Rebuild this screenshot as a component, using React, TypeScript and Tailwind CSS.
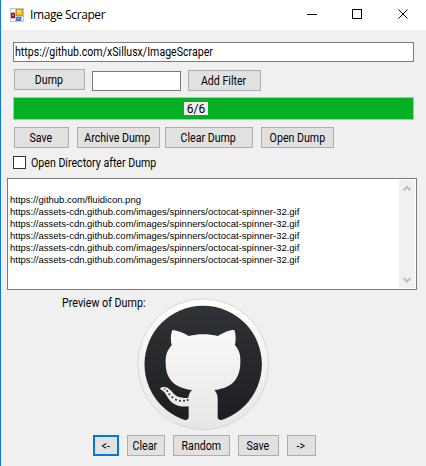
import React from "react";

type ButtonProps = { label: string; className: string; textClass?: string };

function Button({ label, className, textClass = "" }: ButtonProps) {
  return (
    <button
      className={`flex h-[21px] shrink-0 items-center justify-center border bg-[#e1e1e1] pt-[2px] whitespace-nowrap ${className}`}
    >
      <span className={`scale-x-[0.885] leading-[15px] ${textClass}`}>{label}</span>
    </button>
  );
}

function AppIcon() {
  return (
    <svg width="14" height="14" viewBox="0 0 14 14" shapeRendering="crispEdges">
      <rect width="14" height="14" fill="#c4c4c4" />
      <rect x="1" y="1" width="4" height="3" fill="#fff" />
      <rect x="1" y="11" width="4" height="2" fill="#fff" />
      <rect x="12" y="9" width="1" height="4" fill="#fff" />
      <rect x="6" y="1" width="7" height="7" fill="#c9951c" />
      <rect x="7" y="2" width="5" height="5" fill="#fbc92e" />
      <rect x="7" y="2" width="3" height="2" fill="#ffe06c" />
      <rect x="1" y="5" width="4" height="5" fill="#a51414" />
      <rect x="2" y="6" width="2" height="2" fill="#e8604c" />
      <rect x="6" y="9" width="5" height="4" fill="#3f78d0" />
      <rect x="7" y="10" width="3" height="1" fill="#74a9f0" />
    </svg>
  );
}

function Octocat() {
  return (
    <svg className="mt-[7px] h-[134px] w-[134px]" viewBox="18 21 402 402">
      <defs>
        <linearGradient id="ring" x1="0" y1="0" x2="0" y2="1">
          <stop offset="0" stopColor="#ffffff" />
          <stop offset="1" stopColor="#e8e5e6" />
        </linearGradient>
        <linearGradient id="disc" x1="0" y1="0" x2="0" y2="1">
          <stop offset="0" stopColor="#303336" />
          <stop offset="1" stopColor="#1c1d21" />
        </linearGradient>
        <linearGradient id="cat" gradientUnits="userSpaceOnUse" x1="0" y1="24" x2="0" y2="420">
          <stop offset="0" stopColor="#ffffff" />
          <stop offset="1" stopColor="#e8e5e6" />
        </linearGradient>
      </defs>
      <circle cx="219.500" cy="223" r="196" fill="url(#ring)" stroke="#d3d1d2" strokeWidth="2.500" />
      <circle cx="219.500" cy="223" r="176" fill="url(#disc)" />
      <path
        fill="url(#cat)"
        d="M127 120C143 121 161 129 176 138C204 131 236 131 264 138C279 128 297 120 313 120C318 134 318 150 315 166C329 181 332 198 331 218C330 270 303 294 253 300C260 307 263 316 263 328L263 382C263 387 267 390 274 390L268 404L172 404L166 390C172 390 176 387 176 382L176 349C139 353 122 338 110 317C104 306 98 302 91 298C89 293 95 290 102 291C118 292 124 304 133 313C144 323 155 325 175 323C176 314 179 306 187 300C135 294 107 269 107 218C106 198 111 181 125 166C121 150 122 134 127 120Z"
      />
      <g fill="#292b2f">
        <circle cx="104" cy="297" r="2.500" />
        <circle cx="112" cy="303" r="3" />
        <circle cx="118" cy="313" r="3" />
        <circle cx="127" cy="322" r="3" />
        <circle cx="138" cy="329" r="3" />
        <circle cx="150" cy="332" r="3" />
        <circle cx="162" cy="332" r="3" />
        <circle cx="173" cy="330" r="3" />
      </g>
    </svg>
  );
}

const spinner = "https://assets-cdn.github.com/images/spinners/octocat-spinner-32.gif";
const lines = ["https://github.com/fluidicon.png", spinner, spinner, spinner, spinner, spinner];

export default function App() {
  return (
    <div className="h-[466px] w-[426px] overflow-hidden border-l border-[#0f7ad6] bg-[#f0f0f0] font-[Roboto,'Liberation_Sans',sans-serif] text-[12px] text-black">
      <header className="flex h-[30px] items-center bg-white pl-[9px]">
        <AppIcon />
        <span className="ml-[6px] font-['Open_Sans','Noto_Sans',sans-serif] text-[12px] leading-[16px] tracking-[-0.4px] whitespace-nowrap">
          Image Scraper
        </span>
        <svg className="ml-auto mr-[14px]" width="108" height="30" viewBox="0 0 108 30" fill="none" stroke="#000">
          <path d="M3 14.500h10M48.500 9.500h9v9h-9z" shapeRendering="crispEdges" />
          <path d="M94.500 9.500l9 9M103.500 9.500l-9 9" />
        </svg>
      </header>

      <main className="flex flex-col">
        <div className="mt-3 ml-3 flex h-5 w-[401px] items-center border border-[#7a7a7a] bg-white pt-px pl-[1px]">
          <span className="origin-left scale-x-[0.883] leading-[15px] whitespace-nowrap">https://github.com/xSillusx/ImageScraper</span>
        </div>

        <div className="mt-[7px] ml-[13px] flex items-start">
          <Button label="Dump" className="w-[71px] border-[#adadad]" textClass="-translate-x-px" />
          <div className="mt-[2px] ml-[7px] h-5 w-[89px] border border-[#7a7a7a] bg-white" />
          <Button label="Add Filter" className="mt-px ml-[7px] w-[73px] border-[#adadad]" textClass="-translate-x-px" />
        </div>

        <div className="mt-[6px] ml-3 flex h-[23px] w-[401px] border border-[#bcbcbc] bg-[#06b025] pt-1 pl-[170px]">
          <span className="flex h-[13px] w-6 items-center justify-center bg-[#f0f0f0]">6/6</span>
        </div>

        <div className="mt-[7px] ml-[13px] flex">
          <Button label="Save" className="w-[55px] border-[#adadad]" textClass="-translate-x-px" />
          <Button label="Archive Dump" className="ml-2 w-[83px] border-[#adadad]" textClass="-translate-x-px" />
          <Button label="Clear Dump" className="ml-[5px] w-[88px] border-[#adadad]" textClass="-translate-x-px" />
          <Button label="Open Dump" className="ml-2 w-[73px] border-[#adadad]" />
        </div>

        <label className="mt-2 ml-3 flex h-[13px] items-center">
          <span className="h-[13px] w-[13px] border border-[#333] bg-white" />
          <span className="ml-[5px] origin-left scale-x-[0.885] pt-px whitespace-nowrap">Open Directory after Dump</span>
        </label>

        <div className="mt-[9px] ml-[6px] flex h-[112px] w-[410px] justify-between border border-[#7a7a7a] bg-white p-px">
          <div className="pt-[14px] pl-px font-['Liberation_Sans',Arial,sans-serif] text-[9.5px] leading-[12px]">
            {lines.map((line, i) => (
              <div key={i} className="whitespace-nowrap">
                <span>{line}</span>
              </div>
            ))}
          </div>
          <svg className="bg-[#f0f0f0]" width="16" height="108" viewBox="0 0 16 108" fill="none" stroke="#bdbdbd" strokeWidth="2">
            <path d="M4.500 10.500L8 7l3.500 3.500M4.500 98L8 101.500l3.500-3.500" />
          </svg>
        </div>

        <section className="flex h-[145px] items-start">
          <span className="mt-[6px] ml-[61px] w-[74px] origin-left scale-x-[0.893] leading-[15px] whitespace-nowrap">Preview of Dump:</span>
          <Octocat />
        </section>

        <footer className="ml-[92px] flex gap-2">
          <Button label="<-" className="w-[26px] border-2 border-[#0078d7]" />
          <Button label="Clear" className="w-[38px] border-[#adadad]" textClass="-translate-x-px" />
          <Button label="Random" className="w-[57px] border-[#adadad]" />
          <Button label="Save" className="w-[41px] border-[#adadad]" textClass="-translate-x-px" />
          <Button label="->" className="w-[29px] border-[#adadad]" textClass="-translate-x-px" />
        </footer>
      </main>
    </div>
  );
}
